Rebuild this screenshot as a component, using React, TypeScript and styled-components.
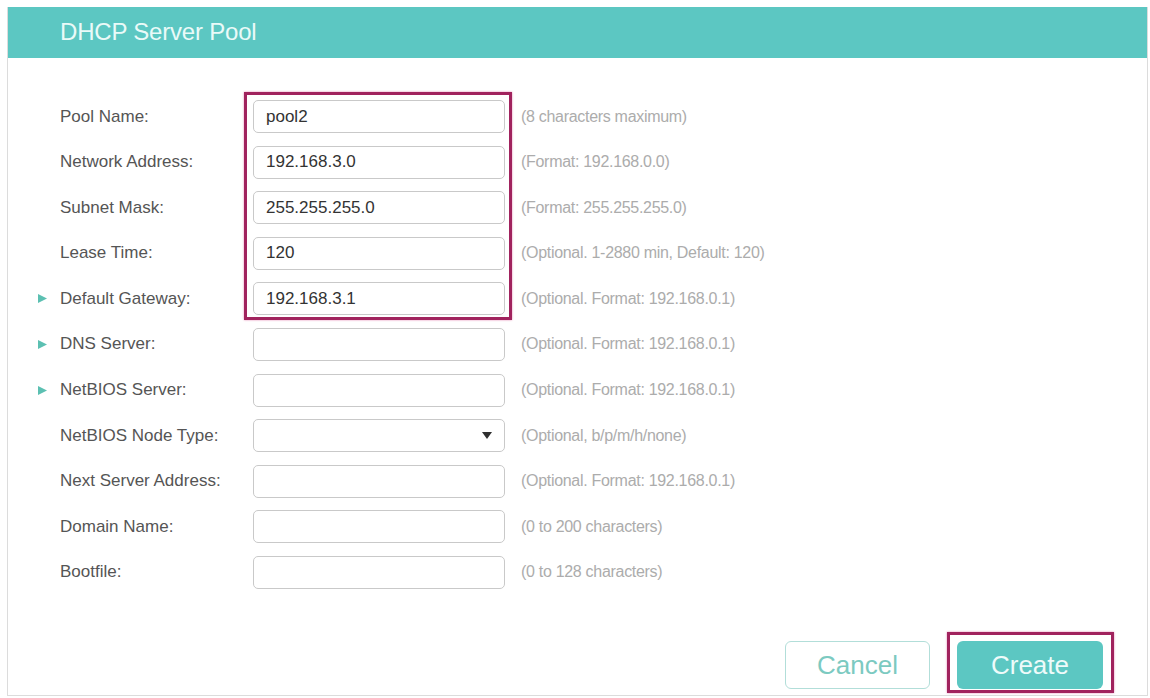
import { Fragment } from 'react';
import styled, { createGlobalStyle } from 'styled-components';

const GlobalStyle = createGlobalStyle`
    html, body {
        margin: 0;
        padding: 0;
        background: #ffffff;
    }
    body {
        font-family: "Liberation Sans", Arial, sans-serif;
    }
`;

const Page = styled.div`
    width: 1150px;
    height: 698px;
    padding: 7px 2px 0 7px;
    box-sizing: border-box;
    overflow: hidden;
`;

const Panel = styled.div`
    border: 1px solid #dcdcdc;
    border-top: none;
    height: 689px;
    box-sizing: border-box;
    display: flex;
    flex-direction: column;
`;

const Header = styled.div`
    height: 51px;
    background: #5cc7c2;
    display: flex;
    align-items: center;
    padding-left: 52px;
    padding-bottom: 2px;
    box-sizing: border-box;
    font-size: 24px;
    color: #eafaf8;
    letter-spacing: -0.2px;
`;

const Form = styled.div`
    display: grid;
    grid-template-columns: 197px 252px auto;
    grid-auto-rows: 33px;
    row-gap: 12.6px;
    column-gap: 16px;
    margin: 42px 0 0 32px;
    align-items: center;
`;

const Label = styled.div`
    display: flex;
    align-items: center;
    font-size: 17px;
    color: #555555;
    grid-column: 1;
`;

const ArrowSlot = styled.span`
    width: 20px;
    margin-left: -2px;
    padding-right: 2px;
    display: flex;
    align-items: center;
`;

const Input = styled.div`
    grid-column: 2;
    height: 33px;
    box-sizing: border-box;
    border: 1px solid #c9c9c9;
    border-radius: 5px;
    background: #ffffff;
    display: flex;
    align-items: center;
    justify-content: space-between;
    padding: 0 12px 0 12px;
    font-size: 17px;
    color: #333333;
    position: relative;
    z-index: 1;
`;

const Hint = styled.div`
    grid-column: 3;
    font-size: 16px;
    color: #acacac;
    letter-spacing: -0.3px;
`;

const Highlight = styled.div`
    grid-column: 2;
    grid-row: 1 / 6;
    align-self: stretch;
    margin: -8px -7px -5px -9px;
    border: 3px solid #a1235e;
    box-shadow: 0 0 2px #e58ab4;
`;

const Footer = styled.div`
    display: flex;
    justify-content: flex-end;
    align-items: flex-end;
    margin-top: auto;
    padding: 0 33px 2px 0;
`;

const Button = styled.div<{ $primary?: boolean }>`
    width: ${(p) => (p.$primary ? '146px' : '145px')};
    height: 48px;
    box-sizing: border-box;
    border-radius: 6px;
    display: flex;
    align-items: center;
    justify-content: center;
    font-size: 26px;
    background: ${(p) => (p.$primary ? '#5cc7c2' : '#ffffff')};
    color: ${(p) => (p.$primary ? '#eefbfa' : '#7ccac1')};
    border: ${(p) => (p.$primary ? 'none' : '1px solid #b2ded9')};
    margin-bottom: ${(p) => (p.$primary ? '0' : '4px')};
`;

const ButtonMark = styled.div`
    margin-left: 17px;
    border: 3px solid #a1235e;
    box-shadow: 0 0 2px #e58ab4;
    padding: 6px 8px 1px 7px;
`;

const RightArrow = () => (
    <svg width="9" height="9" viewBox="0 0 9 9">
        <polygon points="0,0 9,4.5 0,9" fill="#5cc0b2" />
    </svg>
);

const DownArrow = () => (
    <svg width="10" height="7" viewBox="0 0 10 7">
        <polygon points="0,0 10,0 5,7" fill="#2f2f2f" />
    </svg>
);

type TRow = {
    label: string;
    value?: string;
    hint: string;
    arrow?: boolean;
    select?: boolean;
};

const rows: TRow[] = [
    { label: 'Pool Name:', value: 'pool2', hint: '(8 characters maximum)' },
    { label: 'Network Address:', value: '192.168.3.0', hint: '(Format: 192.168.0.0)' },
    { label: 'Subnet Mask:', value: '255.255.255.0', hint: '(Format: 255.255.255.0)' },
    { label: 'Lease Time:', value: '120', hint: '(Optional. 1-2880 min, Default: 120)' },
    { label: 'Default Gateway:', value: '192.168.3.1', hint: '(Optional. Format: 192.168.0.1)', arrow: true },
    { label: 'DNS Server:', hint: '(Optional. Format: 192.168.0.1)', arrow: true },
    { label: 'NetBIOS Server:', hint: '(Optional. Format: 192.168.0.1)', arrow: true },
    { label: 'NetBIOS Node Type:', hint: '(Optional, b/p/m/h/none)', select: true },
    { label: 'Next Server Address:', hint: '(Optional. Format: 192.168.0.1)' },
    { label: 'Domain Name:', hint: '(0 to 200 characters)' },
    { label: 'Bootfile:', hint: '(0 to 128 characters)' },
];

export default function App() {
    return (
        <Page>
            <GlobalStyle />
            <Panel>
                <Header>DHCP Server Pool</Header>
                <Form>
                    <Highlight />
                    {rows.map((row, i) => (
                        <Fragment key={row.label}>
                            <Label style={{ gridRow: i + 1 }}>
                                <ArrowSlot>{row.arrow && <RightArrow />}</ArrowSlot>
                                {row.label}
                            </Label>
                            <Input style={{ gridRow: i + 1 }}>
                                <span>{row.value}</span>
                                {row.select && <DownArrow />}
                            </Input>
                            <Hint style={{ gridRow: i + 1 }}>{row.hint}</Hint>
                        </Fragment>
                    ))}
                </Form>
                <Footer>
                    <Button>Cancel</Button>
                    <ButtonMark>
                        <Button $primary>Create</Button>
                    </ButtonMark>
                </Footer>
            </Panel>
        </Page>
    );
}
